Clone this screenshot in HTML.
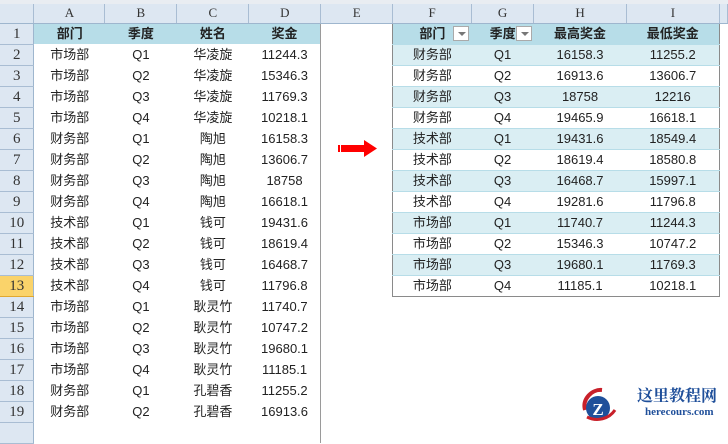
<!DOCTYPE html>
<html><head><meta charset="utf-8"><style>
*{margin:0;padding:0;box-sizing:border-box}
body{width:728px;height:424px;overflow:hidden;background:#fff;font-family:"Liberation Sans","Noto Sans CJK SC",sans-serif;font-size:13px;color:#222;position:relative}
.top{position:absolute;left:0;top:0;width:728px;height:5px;background:#e9edf2;border-bottom:1px solid #c5cdd7}
table{position:absolute;left:0;top:4px;border-collapse:collapse;table-layout:fixed}
td{height:21px;padding:0;text-align:center;white-space:nowrap;overflow:visible;line-height:20px}
tr.h td{height:19px;background:#dde7f2;border-right:1px solid #a9bdd3;border-bottom:1px solid #9eb6ce;color:#333;font-family:"Liberation Serif","Noto Serif CJK SC",serif;font-size:13px;line-height:18px}
td.rh{background:#dde7f2;border-right:1px solid #9eb6ce;border-bottom:1px solid #a9bdd3;font-family:"Liberation Serif",serif;font-size:15px;color:#333}
td.sel{background:#fad36a;border-bottom:1px solid #e0a830}
.hd{background:#b7dde8;font-weight:bold}
.d{border-right:1px solid #9a9a9a}
.band td.t{background:#daeef3}
td.t{border-bottom:1px solid #b7dde8}
td.tl{border-left:1px solid #8a8a8a}
td.tr{border-right:1px solid #8a8a8a}
tr.last td.t{border-bottom:1px solid #8a8a8a}
.dd{position:absolute;width:16px;height:15px;border:1px solid #aaa;background:#fff}
.dd:after{content:"";position:absolute;left:4px;top:5px;border-left:4px solid transparent;border-right:4px solid transparent;border-top:4px solid #777}
</style></head><body>
<div class="top"></div>
<table>
<colgroup><col style="width:34px"><col style="width:71px"><col style="width:72px"><col style="width:72px"><col style="width:72px"><col style="width:72px"><col style="width:79px"><col style="width:62px"><col style="width:93px"><col style="width:93px"><col style="width:8px"></colgroup>
<tr class="h"><td style="background:#dde7f2"></td><td>A</td><td>B</td><td>C</td><td>D</td><td>E</td><td>F</td><td>G</td><td>H</td><td>I</td><td></td></tr>
<tr><td class="rh">1</td><td class="hd">部门</td><td class="hd">季度</td><td class="hd">姓名</td><td class="hd d">奖金</td><td></td><td class="hd t tl" style="border-top:1px solid #8a8a8a">部门</td><td class="hd t" style="border-top:1px solid #8a8a8a">季度</td><td class="hd t" style="border-top:1px solid #8a8a8a">最高奖金</td><td class="hd t tr" style="border-top:1px solid #8a8a8a">最低奖金</td><td></td></tr>
<tr class="band"><td class="rh">2</td><td>市场部</td><td>Q1</td><td>华凌旋</td><td class="d">11244.3</td><td></td><td class="t tl">财务部</td><td class="t">Q1</td><td class="t">16158.3</td><td class="t tr">11255.2</td><td></td></tr>
<tr><td class="rh">3</td><td>市场部</td><td>Q2</td><td>华凌旋</td><td class="d">15346.3</td><td></td><td class="t tl">财务部</td><td class="t">Q2</td><td class="t">16913.6</td><td class="t tr">13606.7</td><td></td></tr>
<tr class="band"><td class="rh">4</td><td>市场部</td><td>Q3</td><td>华凌旋</td><td class="d">11769.3</td><td></td><td class="t tl">财务部</td><td class="t">Q3</td><td class="t">18758</td><td class="t tr">12216</td><td></td></tr>
<tr><td class="rh">5</td><td>市场部</td><td>Q4</td><td>华凌旋</td><td class="d">10218.1</td><td></td><td class="t tl">财务部</td><td class="t">Q4</td><td class="t">19465.9</td><td class="t tr">16618.1</td><td></td></tr>
<tr class="band"><td class="rh">6</td><td>财务部</td><td>Q1</td><td>陶旭</td><td class="d">16158.3</td><td></td><td class="t tl">技术部</td><td class="t">Q1</td><td class="t">19431.6</td><td class="t tr">18549.4</td><td></td></tr>
<tr><td class="rh">7</td><td>财务部</td><td>Q2</td><td>陶旭</td><td class="d">13606.7</td><td></td><td class="t tl">技术部</td><td class="t">Q2</td><td class="t">18619.4</td><td class="t tr">18580.8</td><td></td></tr>
<tr class="band"><td class="rh">8</td><td>财务部</td><td>Q3</td><td>陶旭</td><td class="d">18758</td><td></td><td class="t tl">技术部</td><td class="t">Q3</td><td class="t">16468.7</td><td class="t tr">15997.1</td><td></td></tr>
<tr><td class="rh">9</td><td>财务部</td><td>Q4</td><td>陶旭</td><td class="d">16618.1</td><td></td><td class="t tl">技术部</td><td class="t">Q4</td><td class="t">19281.6</td><td class="t tr">11796.8</td><td></td></tr>
<tr class="band"><td class="rh">10</td><td>技术部</td><td>Q1</td><td>钱可</td><td class="d">19431.6</td><td></td><td class="t tl">市场部</td><td class="t">Q1</td><td class="t">11740.7</td><td class="t tr">11244.3</td><td></td></tr>
<tr><td class="rh">11</td><td>技术部</td><td>Q2</td><td>钱可</td><td class="d">18619.4</td><td></td><td class="t tl">市场部</td><td class="t">Q2</td><td class="t">15346.3</td><td class="t tr">10747.2</td><td></td></tr>
<tr class="band"><td class="rh">12</td><td>技术部</td><td>Q3</td><td>钱可</td><td class="d">16468.7</td><td></td><td class="t tl">市场部</td><td class="t">Q3</td><td class="t">19680.1</td><td class="t tr">11769.3</td><td></td></tr>
<tr class="last"><td class="rh sel">13</td><td>技术部</td><td>Q4</td><td>钱可</td><td class="d">11796.8</td><td></td><td class="t tl">市场部</td><td class="t">Q4</td><td class="t">11185.1</td><td class="t tr">10218.1</td><td></td></tr>
<tr><td class="rh">14</td><td>市场部</td><td>Q1</td><td>耿灵竹</td><td class="d">11740.7</td><td colspan="6"></td></tr>
<tr><td class="rh">15</td><td>市场部</td><td>Q2</td><td>耿灵竹</td><td class="d">10747.2</td><td colspan="6"></td></tr>
<tr><td class="rh">16</td><td>市场部</td><td>Q3</td><td>耿灵竹</td><td class="d">19680.1</td><td colspan="6"></td></tr>
<tr><td class="rh">17</td><td>市场部</td><td>Q4</td><td>耿灵竹</td><td class="d">11185.1</td><td colspan="6"></td></tr>
<tr><td class="rh">18</td><td>财务部</td><td>Q1</td><td>孔碧香</td><td class="d">11255.2</td><td colspan="6"></td></tr>
<tr><td class="rh">19</td><td>财务部</td><td>Q2</td><td>孔碧香</td><td class="d">16913.6</td><td colspan="6"></td></tr>
<tr><td class="rh"></td><td></td><td></td><td></td><td class="d"></td><td colspan="6"></td></tr>
</table>
<div class="dd" style="left:453px;top:26px"></div>
<div class="dd" style="left:516px;top:26px"></div>
<svg style="position:absolute;left:337px;top:140px" width="44" height="18"><rect x="1" y="5" width="2" height="7" fill="#f00"/><rect x="4" y="5" width="24" height="7" fill="#f00"/><polygon points="27,0 40,8.5 27,17" fill="#f00"/></svg>
<svg style="position:absolute;left:580px;top:384px" width="50" height="40">
<path d="M5 26 C2 15 12 5 22 6" stroke="#c8202a" stroke-width="4" fill="none"/>
<circle cx="18" cy="24" r="12" fill="#1f4f9a"/>
<text x="18" y="31" font-family="Liberation Serif,serif" font-weight="bold" font-size="17" fill="#fff" text-anchor="middle">Z</text>
<path d="M7 33 C17 38 29 35 35 26" stroke="#c8202a" stroke-width="3" fill="none"/>
</svg>
<div style="position:absolute;left:637px;top:385px;font-family:'Noto Serif CJK SC',serif;font-weight:bold;font-size:16px;color:#1f4f9a;line-height:19px">这里教程网</div>
<div style="position:absolute;left:645px;top:406px;font-family:'Liberation Serif',serif;font-weight:bold;font-size:11px;color:#1f4f9a;line-height:13px">herecours.com</div>
</body></html>
